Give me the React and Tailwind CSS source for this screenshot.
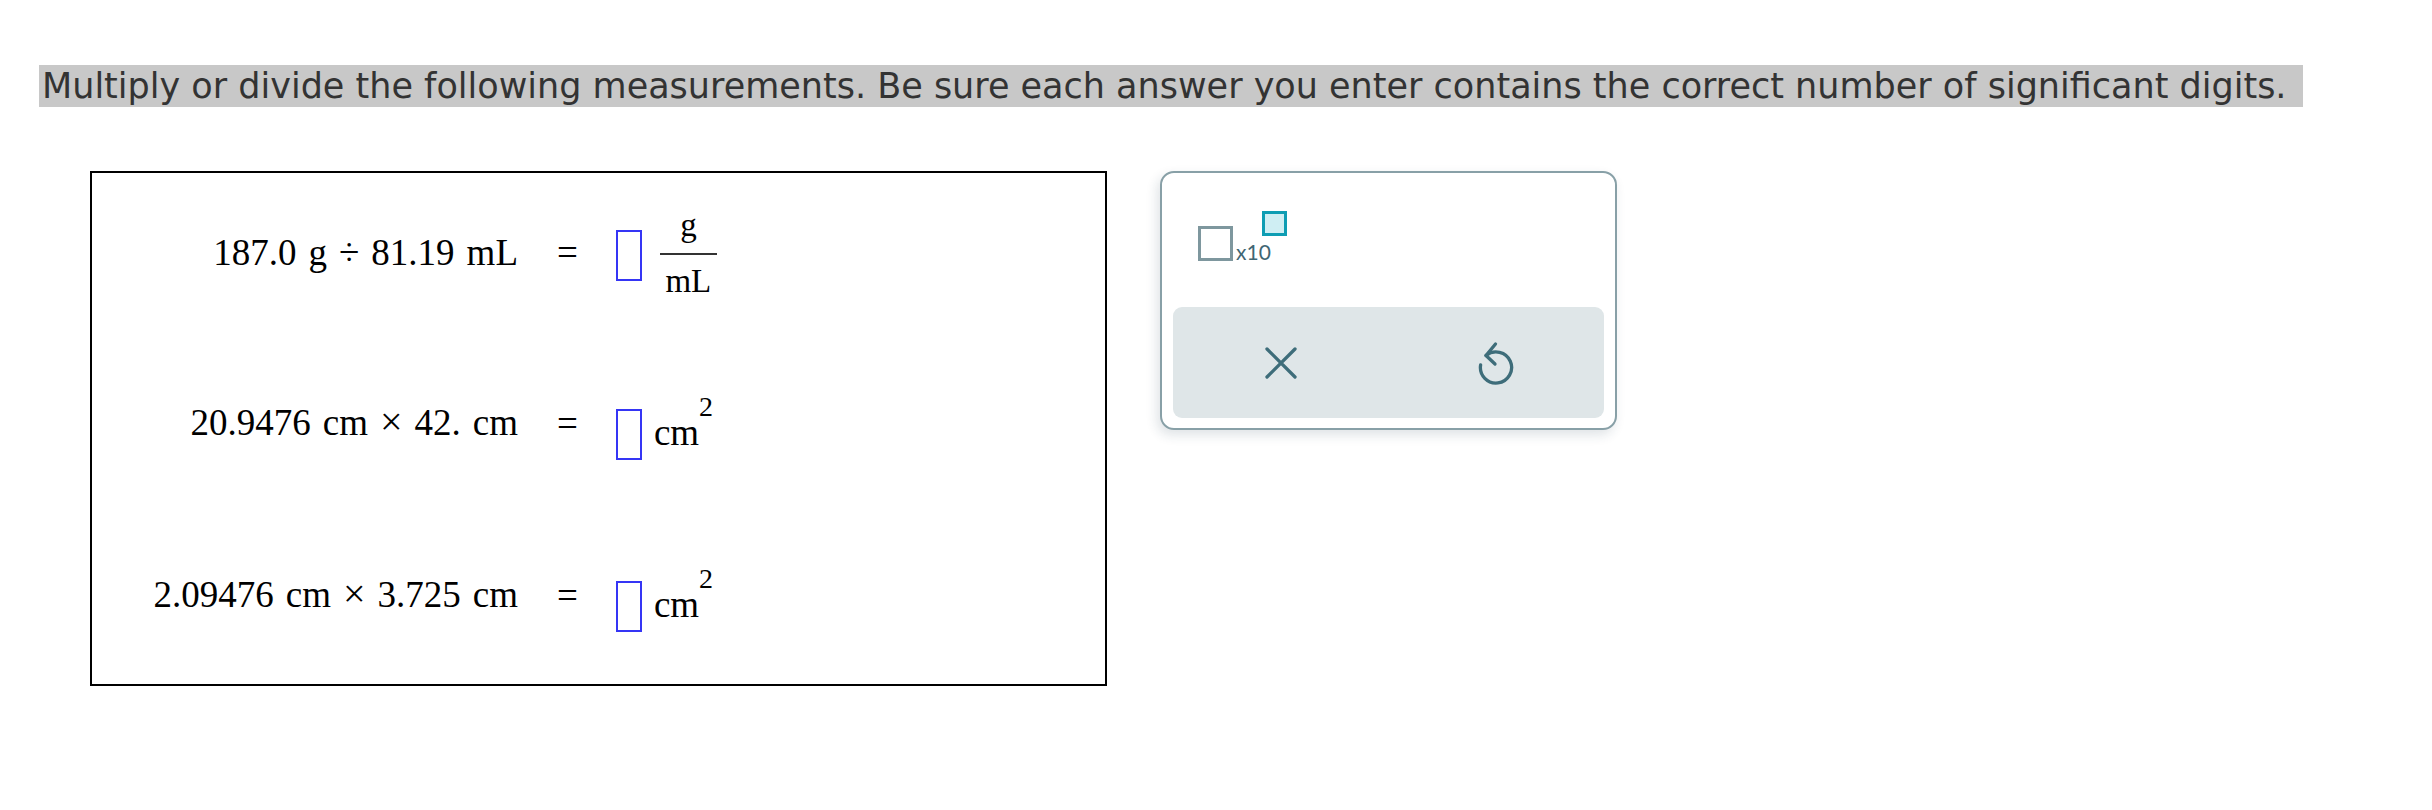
const serif = "font-['Liberation_Serif','Times_New_Roman',serif]";

function AnswerBox({ className = '' }) {
  return <div className={`h-[51px] w-[26px] shrink-0 border-2 border-[#3535f5] ${className}`} />;
}

function Expr({ parts, className = '' }) {
  return (
    <div className={`flex w-[426px] shrink-0 items-baseline justify-end gap-[12px] text-[37px] leading-none ${className}`}>
      {parts.map((p, i) => (
        <span key={i} className={p === '×' ? 'text-[40px]' : ''}>
          {p}
        </span>
      ))}
    </div>
  );
}

function Equals({ className = '' }) {
  return <span className={`ml-[39px] text-[37px] leading-none ${className}`}>=</span>;
}

function SquaredUnit({ unit }) {
  return (
    <div className="ml-[12px] flex items-start">
      <span className="mt-[24px] text-[37px] leading-none">{unit}</span>
      <span className="mt-[3px] text-[28px] leading-none">2</span>
    </div>
  );
}

function MathBox() {
  return (
    <div className={`h-[515px] w-[1017px] shrink-0 border-2 border-black text-black ${serif}`}>
      {/* row 1: g / mL */}
      <div className="mt-[27px] flex h-[100px] items-start">
        <Expr parts={['187.0', 'g', '÷', '81.19', 'mL']} className="mt-[34px]" />
        <Equals className="mt-[34px]" />
        <AnswerBox className="ml-[38px] mt-[30px]" />
        <div className="ml-[18px] mt-[9px] flex w-[57px] flex-col items-center">
          <span className="text-[33px] leading-none">g</span>
          <div className="mt-[11px] h-[2px] w-[57px] bg-[#333]" />
          <span className="mt-[10px] text-[33px] leading-none">mL</span>
        </div>
      </div>

      {/* row 2 */}
      <div className="mt-[90px] flex h-[100px] items-start">
        <Expr parts={['20.9476', 'cm', '×', '42.', 'cm']} className="mt-[12px]" />
        <Equals className="mt-[15px]" />
        <AnswerBox className="ml-[38px] mt-[19px]" />
        <SquaredUnit unit="cm" />
      </div>

      {/* row 3 */}
      <div className="mt-[72px] flex h-[100px] items-start">
        <Expr parts={['2.09476', 'cm', '×', '3.725', 'cm']} className="mt-[12px]" />
        <Equals className="mt-[15px]" />
        <AnswerBox className="ml-[38px] mt-[19px]" />
        <SquaredUnit unit="cm" />
      </div>
    </div>
  );
}

function ClearIcon() {
  return (
    <svg width="32" height="32" viewBox="0 0 32 32" fill="none" stroke="#3e6d7a" strokeWidth="3.3" strokeLinecap="round" aria-hidden="true">
      <path d="M2 2l28 28M30 2L2 30" />
    </svg>
  );
}

function UndoIcon() {
  return (
    <svg width="36" height="44" viewBox="0 0 36 44" fill="none" stroke="#3e6d7a" strokeWidth="3.3" strokeLinecap="round" strokeLinejoin="round" aria-hidden="true">
      <path d="M2.6 24A15.6 15.6 0 1 0 8 14.5" />
      <path d="M17.5 3L8 14.5l9 8.5" />
    </svg>
  );
}

function Palette() {
  return (
    <div className="ml-[53px] h-[259px] w-[457px] shrink-0 rounded-[14px] border-2 border-[#88a0a7] bg-white shadow-[-3px_5px_12px_rgba(30,60,75,0.14)]">
      <div className="flex h-[134px] items-start pl-[36px] pt-[38px]">
        <div className="mt-[15px] h-[35px] w-[35px] border-[3px] border-[#7e979e] bg-white" />
        <span className="ml-[3px] mt-[30px] font-['Lato',sans-serif] text-[21px] leading-none text-[#3f6673]">x10</span>
        <div className="ml-[-9px] h-[25px] w-[25px] border-[3px] border-[#0e9db3] bg-[#cfeef3]" />
      </div>
      <div className="mx-[11px] grid h-[111px] grid-cols-2 place-items-center rounded-[9px] bg-[#dfe6e8]">
        <ClearIcon />
        <UndoIcon />
      </div>
    </div>
  );
}

export default function App() {
  return (
    <div className="min-h-screen bg-white">
      <div className="flex pl-[39px] pt-[65px]">
        <p className="bg-[#c8c8c8] pl-[3px] pr-[16px] font-['DejaVu_Sans',Verdana,sans-serif] text-[35px] leading-[42px] text-[#333]">
          Multiply or divide the following measurements. Be sure each answer you enter contains the correct number of significant digits.
        </p>
      </div>
      <div className="mt-[64px] flex items-start pl-[90px]">
        <MathBox />
        <Palette />
      </div>
    </div>
  );
}
